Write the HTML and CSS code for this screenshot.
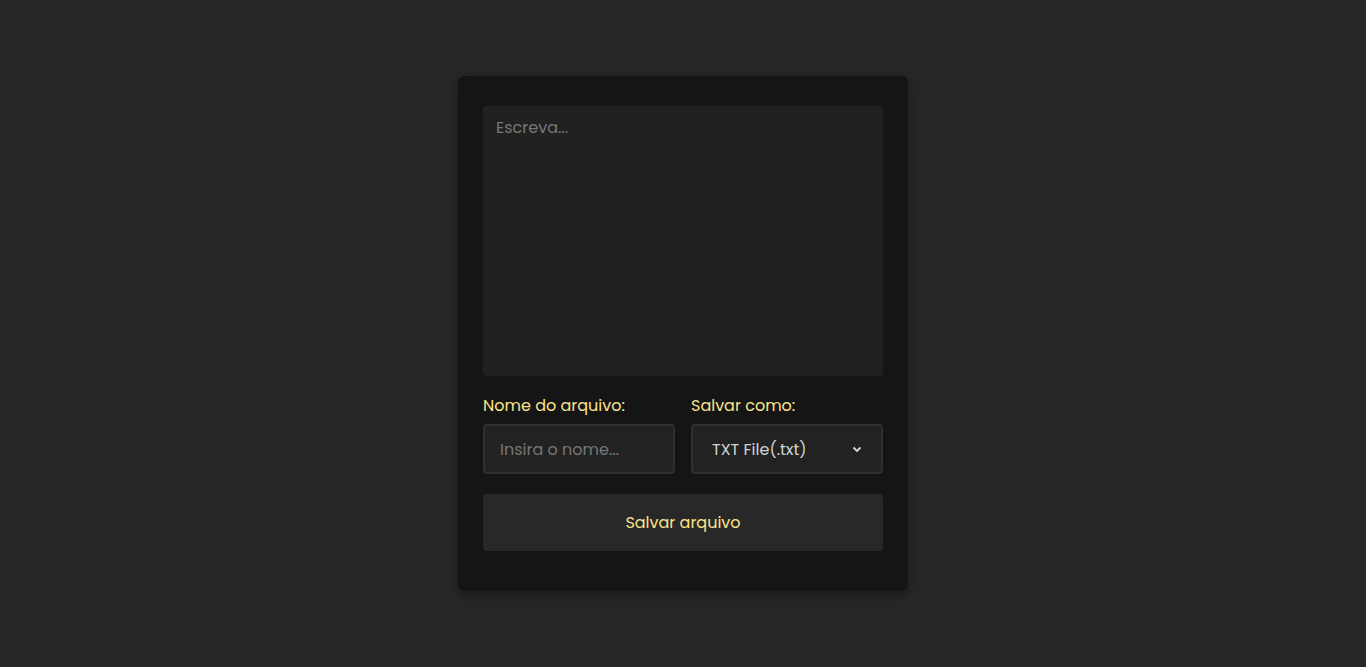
FILE: index.html
```html
<!DOCTYPE html>
<html lang="pt">
<head>
<meta charset="utf-8">
<title>Salvar arquivo</title>
<link rel="stylesheet" href="styles.css">
</head>
<body>
<main class="page">
  <div class="card">
    <textarea class="editor" placeholder="Escreva..."></textarea>
    <div class="fields">
      <div class="field">
        <label class="label">Nome do arquivo:</label>
        <input class="input" type="text" placeholder="Insira o nome...">
      </div>
      <div class="field">
        <label class="label">Salvar como:</label>
        <div class="select">
          <span class="select-text">TXT File(.txt)</span>
          <svg class="chev" width="10" height="7" viewBox="0 0 10 7"><path d="M1.5 1.5 L5 5 L8.5 1.5" fill="none" stroke="#d8d8d8" stroke-width="1.8"/></svg>
        </div>
      </div>
    </div>
    <button class="save">Salvar arquivo</button>
  </div>
</main>
</body>
</html>
```

FILE: styles.css
```css
* { box-sizing: border-box; }
html, body { margin: 0; height: 100%; }
body {
  background: #272727;
  font-family: "Poppins", "Lato", "Noto Sans", sans-serif;
}
.page {
  display: flex;
  justify-content: center;
  padding-top: 76px;
}
.card {
  width: 450px;
  background: #151515;
  border-radius: 6px;
  padding: 30px 25px 40px;
  box-shadow: 0 4px 12px rgba(0,0,0,0.35);
  display: flex;
  flex-direction: column;
}
.editor {
  width: 400px;
  height: 270px;
  background: #212121;
  border: none;
  border-radius: 4px;
  resize: none;
  padding: 9px 13px;
  font-family: inherit;
  font-size: 16px;
  color: #ddd;
  outline: none;
  display: block;
}
.editor::placeholder { color: #777; }
.fields {
  display: flex;
  gap: 16px;
  margin-top: 19px;
}
.field {
  display: flex;
  flex-direction: column;
  width: 192px;
}
.label {
  color: #fbe38a;
  font-size: 16px;
  line-height: 22px;
  margin-bottom: 7px;
}
.input {
  height: 50px;
  width: 192px;
  background: #222;
  border: 2px solid #2f2f2f;
  border-radius: 4px;
  padding: 0 15px;
  font-family: inherit;
  font-size: 16px;
  color: #ddd;
  outline: none;
}
.input::placeholder { color: #767676; }
.select {
  height: 50px;
  background: #222;
  border: 2px solid #2f2f2f;
  border-radius: 4px;
  padding: 0 19px 0 19px;
  display: flex;
  align-items: center;
  justify-content: space-between;
}
.select-text {
  color: #d2d2d2;
  font-size: 16px;
}
.chev { display: block; }
.save {
  margin-top: 20px;
  height: 57px;
  width: 400px;
  background: #282828;
  border: none;
  border-radius: 4px;
  color: #fbe38a;
  font-family: inherit;
  font-size: 16px;
  cursor: pointer;
}
```
